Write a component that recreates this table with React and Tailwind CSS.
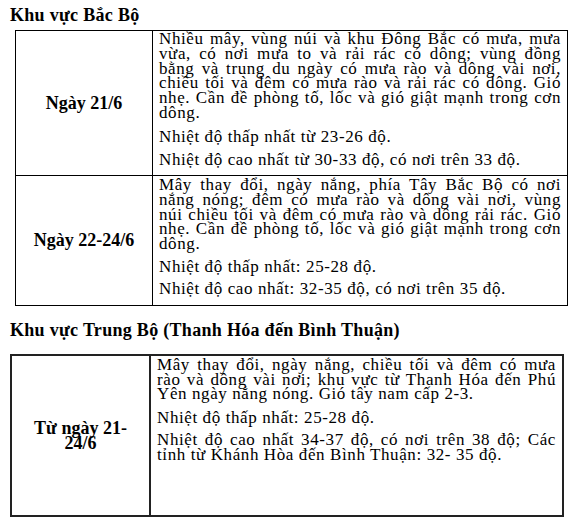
import React from "react";

const bac1 = [
    "Nhiều mây, vùng núi và khu Đông Bắc có mưa, mưa",
    "vừa, có nơi mưa to và rải rác có dông; vùng đồng",
    "bằng và trung du ngày có mưa rào và dông vài nơi,",
    "chiều tối và đêm có mưa rào và rải rác có dông. Gió",
    "nhẹ. Cần đề phòng tố, lốc và gió giật mạnh trong cơn",
    "dông.",
];

const bac2 = [
    "Mây thay đổi, ngày nắng, phía Tây Bắc Bộ có nơi",
    "nắng nóng; đêm có mưa rào và dông vài nơi, vùng",
    "núi chiều tối và đêm có mưa rào và dông rải rác. Gió",
    "nhẹ. Cần đề phòng tố, lốc và gió giật mạnh trong cơn",
    "dông.",
];

const trung1 = [
    "Mây thay đổi, ngày nắng, chiều tối và đêm có mưa",
    "rào và dông vài nơi; khu vực từ Thanh Hóa đến Phú",
    "Yên ngày nắng nóng. Gió tây nam cấp 2-3.",
];

const trung3 = [
    "Nhiệt độ cao nhất 34-37 độ, có nơi trên 38 độ; Các",
    "tỉnh từ Khánh Hòa đến Bình Thuận: 32- 35 độ.",
];

// justified paragraph, one div per printed line so the breaks stay put
function Para({ lines, className = "" }) {
    return (
        <div className={className}>
            {lines.map((l, i) => (
                <div
                    key={i}
                    className={i < lines.length - 1 ? "[text-align-last:justify]" : ""}
                >
                    {l}
                </div>
            ))}
        </div>
    );
}

export default function App() {
    return (
        <div className="w-[582px] h-[527px] overflow-hidden bg-white text-black font-['Liberation_Serif','Times_New_Roman',serif]">
            {/* Bắc Bộ */}
            <div className="h-[30px] pl-[10px] pt-[4px] text-[18px] leading-[22px] font-bold tracking-[0.3px]">
                Khu vực Bắc Bộ
            </div>
            <div className="ml-[15px] w-[553px] border border-black text-[17px] leading-[14.8px] tracking-[0.6px]">
                <div className="flex h-[144px]">
                    <div className="w-[137px] shrink-0 border-r border-black flex items-center justify-center text-[18px] font-bold tracking-normal">
                        Ngày 21/6
                    </div>
                    <div className="flex-1 px-[6px] pt-[1px]">
                        <Para lines={bac1} />
                        <div className="mt-[9px]">Nhiệt độ thấp nhất từ 23-26 độ.</div>
                        <div className="mt-[8px]">Nhiệt độ cao nhất từ 30-33 độ, có nơi trên 33 độ.</div>
                    </div>
                </div>
                <div className="flex h-[130px] border-t border-black">
                    <div className="w-[137px] shrink-0 border-r border-black flex items-center justify-center text-[18px] font-bold tracking-normal">
                        Ngày 22-24/6
                    </div>
                    <div className="flex-1 px-[6px] pt-[2px]">
                        <Para lines={bac2} />
                        <div className="mt-[8px]">Nhiệt độ thấp nhất: 25-28 độ.</div>
                        <div className="mt-[7px]">Nhiệt độ cao nhất: 32-35 độ, có nơi trên 35 độ.</div>
                    </div>
                </div>
            </div>

            {/* Trung Bộ */}
            <div className="h-[48px] pl-[10px] pt-[13px] text-[18px] leading-[22px] font-bold tracking-[0.3px]">
                Khu vực Trung Bộ (Thanh Hóa đến Bình Thuận)
            </div>
            <div className="ml-[10px] w-[554px] h-[163px] border-2 border-[#222] flex text-[17px] leading-[14.6px] tracking-[0.6px]">
                <div className="w-[139px] shrink-0 border-r-2 border-[#222] flex items-center justify-center text-center text-[18px] leading-[15px] font-bold tracking-normal">
                    Từ ngày 21-<br />24/6
                </div>
                <div className="flex-1 px-[6px] pt-[2px]">
                    <Para lines={trung1} />
                    <div className="mt-[9px]">Nhiệt độ thấp nhất: 25-28 độ.</div>
                    <Para lines={trung3} className="mt-[8px]" />
                </div>
            </div>
        </div>
    );
}
